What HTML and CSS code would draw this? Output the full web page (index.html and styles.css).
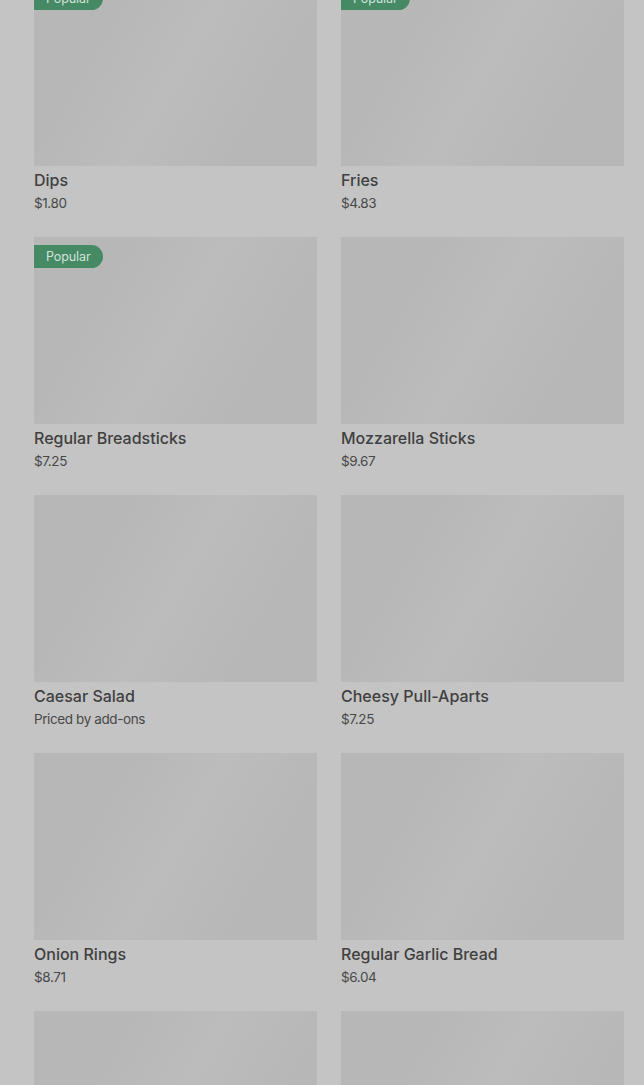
FILE: index.html
```html
<!DOCTYPE html>
<html>
<head>
<meta charset="utf-8">
<link rel="stylesheet" href="styles.css">
</head>
<body>
<div class="grid">
  <div class="card"><div class="img"><span class="badge">Popular</span></div><div class="info"><div class="name">Dips</div><div class="price">$1.80</div></div></div>
  <div class="card"><div class="img"><span class="badge">Popular</span></div><div class="info"><div class="name">Fries</div><div class="price">$4.83</div></div></div>
  <div class="card"><div class="img"><span class="badge">Popular</span></div><div class="info"><div class="name">Regular Breadsticks</div><div class="price">$7.25</div></div></div>
  <div class="card"><div class="img"></div><div class="info"><div class="name">Mozzarella Sticks</div><div class="price">$9.67</div></div></div>
  <div class="card"><div class="img"></div><div class="info"><div class="name">Caesar Salad</div><div class="price">Priced by add-ons</div></div></div>
  <div class="card"><div class="img"></div><div class="info"><div class="name">Cheesy Pull-Aparts</div><div class="price">$7.25</div></div></div>
  <div class="card"><div class="img"></div><div class="info"><div class="name">Onion Rings</div><div class="price">$8.71</div></div></div>
  <div class="card"><div class="img"></div><div class="info"><div class="name">Regular Garlic Bread</div><div class="price">$6.04</div></div></div>
  <div class="card"><div class="img"></div></div>
  <div class="card"><div class="img"></div></div>
</div>
</body>
</html>
```

FILE: styles.css
```css
html, body {
  margin: 0;
  padding: 0;
  background: #c4c4c4;
  overflow: hidden;
  height: 1085px;
}
body {
  font-family: Inter, Roboto, "Liberation Sans", sans-serif;
}
.grid {
  display: grid;
  grid-template-columns: 283px 283px;
  column-gap: 24px;
  row-gap: 24px;
  padding: 0 20px 0 34px;
  margin-top: -21px;
}
.card {
  display: flex;
  flex-direction: column;
}
.img {
  position: relative;
  height: 187px;
  background: linear-gradient(120deg, #b7b7b7 25%, #bcbcbc 50%, #b7b7b7 78%);
}
.badge {
  position: absolute;
  top: 8px;
  left: 0;
  height: 23px;
  line-height: 23px;
  padding: 0 12px;
  background: #458a65;
  color: #d3e2d8;
  font-size: 12.5px;
  letter-spacing: -0.1px;
  border-radius: 0 12px 12px 0;
}
.info {
  padding-top: 2px;
}
.name {
  font-size: 16px;
  font-weight: 500;
  line-height: 24px;
  color: #404040;
}
.price {
  margin-top: 1px;
  font-size: 13.5px;
  line-height: 20px;
  color: #484848;
  letter-spacing: -0.4px;
}
```
